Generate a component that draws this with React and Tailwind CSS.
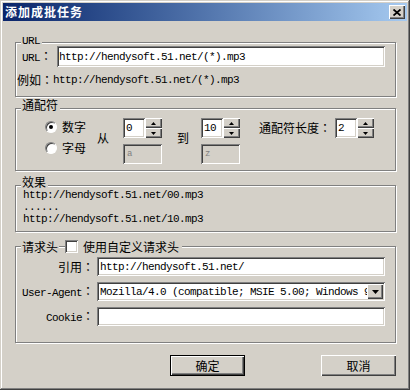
import React from "react";

const MONO = "font-['Liberation_Mono'] text-[11px] tracking-[-0.6px]";
const COLON = "font-['Noto_Sans_CJK_TC']";
const SUNKEN =
  "shadow-[inset_1px_1px_#808080,inset_-1px_-1px_#ffffff,inset_2px_2px_#404040,inset_-2px_-2px_#d4d0c8]";
const RAISED =
  "shadow-[inset_1px_1px_#ffffff,inset_-1px_-1px_#404040,inset_-2px_-2px_#808080]";
const ETCHED = "border border-[#808080] shadow-[1px_1px_0_#ffffff,inset_1px_1px_0_#ffffff]";

const Arrow = ({ down }) => (
  <svg width="5" height="3" viewBox="0 0 5 3">
    <path d={down ? "M0 0H5L2.5 3z" : "M2.5 0L5 3H0z"} fill="#000" />
  </svg>
);

const Spin = ({ value }) => (
  <div className="flex h-[20px]">
    <div className={`flex h-full w-[22px] items-center bg-white pl-[3px] ${SUNKEN} ${MONO}`}>{value}</div>
    <div className="flex w-[17px] flex-col">
      <div className={`flex h-[10px] items-center justify-center bg-[#d4d0c8] ${RAISED}`}>
        <Arrow />
      </div>
      <div className={`flex h-[10px] items-center justify-center bg-[#d4d0c8] ${RAISED}`}>
        <Arrow down />
      </div>
    </div>
  </div>
);

const Disabled = ({ value }) => (
  <div
    className={`flex h-[20px] w-[39px] items-center bg-[#d4d0c8] pl-[4px] font-['Liberation_Mono'] text-[9px] text-[#808080] ${SUNKEN}`}
  >
    {value}
  </div>
);

const Radio = ({ checked, label }) => (
  <div className="flex h-[16px] items-center gap-[5px]">
    <div className="flex h-[12px] w-[12px] items-center justify-center rounded-full border border-t-[#808080] border-l-[#808080] border-r-white border-b-white bg-white shadow-[inset_1px_1px_#404040]">
      {checked && <div className="h-[4px] w-[4px] rounded-full bg-black" />}
    </div>
    <span>{label}</span>
  </div>
);

const Group = ({ legend, className, children }) => (
  <div className={`ml-[12px] mr-[11px] ${ETCHED} ${className}`}>
    <div className="-mt-[10px] ml-[5px] h-[12px] w-fit bg-[#d4d0c8] pl-[1px] pr-[2px]">{legend}</div>
    {children}
  </div>
);

const Field = ({ children, className = "" }) => (
  <div className={`flex h-[19px] w-[288px] items-center overflow-hidden bg-white pl-[3px] ${SUNKEN} ${className}`}>
    {children}
  </div>
);

export default function App() {
  return (
    <div className="h-[390px] w-[410px] overflow-hidden bg-[#d4d0c8] p-[3px] font-['Noto_Sans_CJK_SC',sans-serif] text-[12px] leading-[12px] text-black shadow-[inset_-1px_-1px_#404040,inset_1px_1px_#d4d0c8,inset_-2px_-2px_#808080,inset_2px_2px_#ffffff]">
      {/* title bar */}
      <div className="flex h-[18px] items-center justify-between bg-linear-to-r from-[#0a246a] to-[#a6caf0] pl-[2px] pr-[2px]">
        <span className="font-bold tracking-[1px] text-white">添加成批任务</span>
        <div className={`flex h-[14px] w-[16px] items-center justify-center bg-[#d4d0c8] ${RAISED}`}>
          <svg width="8" height="7" viewBox="0 0 8 7">
            <path d="M0.5 0.5L7.5 6.5M7.5 0.5L0.5 6.5" stroke="#000" strokeWidth="1.8" />
          </svg>
        </div>
      </div>

      {/* URL */}
      <Group className="mt-[21px] pb-[10px]" legend={<span className={MONO}>URL</span>}>
        <div className="mt-[1px] flex items-center">
          <span className="ml-[6px] w-[35px]">
            <span className={MONO}>URL</span>
            <span className={COLON}>：</span>
          </span>
          <div className={`flex h-[21px] w-[328px] items-center bg-white pl-[2px] ${SUNKEN} ${MONO}`}>
            http://hendysoft.51.net/(*).mp3
          </div>
        </div>
        <div className="mt-[7px] flex h-[12px] items-center pl-[1px]">
          <span>例如</span>
          <span className={COLON}>：</span>
          <span className={MONO}>http://hendysoft.51.net/(*).mp3</span>
        </div>
      </Group>

      {/* 通配符 */}
      <Group className="mt-[11px] pb-[6px]" legend="通配符">
        <div className="flex items-start">
          <div className="ml-[29px] mt-[8px] flex flex-col gap-[5px]">
            <Radio checked label="数字" />
            <Radio label="字母" />
          </div>
          <span className="ml-[11px] mt-[21px]">从</span>
          <div className="ml-[14px] mt-[7px] flex flex-col gap-[6px]">
            <Spin value="0" />
            <Disabled value="a" />
          </div>
          <span className="ml-[15px] mt-[21px]">到</span>
          <div className="ml-[12px] mt-[7px] flex flex-col gap-[6px]">
            <Spin value="10" />
            <Disabled value="z" />
          </div>
          <span className="ml-[19px] mt-[11px]">
            通配符长度<span className={COLON}>：</span>
          </span>
          <div className="ml-[4px] mt-[7px]">
            <Spin value="2" />
          </div>
        </div>
      </Group>

      {/* 效果 */}
      <Group className="mt-[14px] pb-[6px]" legend="效果">
        <div className={`mt-[1px] flex flex-col pl-[7px] leading-[12px] ${MONO}`}>
          <span>http://hendysoft.51.net/00.mp3</span>
          <span>......</span>
          <span>http://hendysoft.51.net/10.mp3</span>
        </div>
      </Group>

      {/* 请求头 */}
      <div className={`ml-[12px] mr-[11px] mt-[14px] pb-[16px] ${ETCHED}`}>
        <div className="-mt-[7px] ml-[5px] flex h-[13px] items-center">
          <span className="bg-[#d4d0c8] px-[1px]">请求头</span>
          <div className="ml-[6px] flex items-center bg-[#d4d0c8] pr-[3px]">
            <div className={`h-[13px] w-[13px] bg-white ${SUNKEN}`} />
            <span className="ml-[5px]">使用自定义请求头</span>
          </div>
        </div>
        <div className="mt-[4px] flex flex-col gap-[6px]">
          <div className="flex items-center">
            <span className="w-[78px] text-right">
              引用<span className={COLON}>：</span>
            </span>
            <Field className="ml-[3px]">
              <span className={MONO}>http://hendysoft.51.net/</span>
            </Field>
          </div>
          <div className="flex items-center">
            <span className="w-[78px] text-right">
              <span className={MONO}>User-Agent</span>
              <span className={COLON}>：</span>
            </span>
            <Field className="ml-[3px] justify-between pr-[2px]">
              <span className={`overflow-hidden whitespace-nowrap ${MONO}`}>
                Mozilla/4.0 (compatible; MSIE 5.00; Windows 98)
              </span>
              <div className={`flex h-[15px] w-[16px] shrink-0 items-center justify-center bg-[#d4d0c8] ${RAISED}`}>
                <svg width="7" height="4" viewBox="0 0 7 4">
                  <path d="M0 0H7L3.5 4z" fill="#000" />
                </svg>
              </div>
            </Field>
          </div>
          <div className="flex items-center">
            <span className="w-[78px] text-right">
              <span className={MONO}>Cookie</span>
              <span className={COLON}>：</span>
            </span>
            <Field className="ml-[3px]" />
          </div>
        </div>
      </div>

      {/* buttons */}
      <div className="mr-[11px] mt-[12px] flex justify-end gap-[76px]">
        <button className={`h-[21px] w-[75px] border border-black bg-[#d4d0c8] ${RAISED}`}>确定</button>
        <button className={`h-[21px] w-[75px] bg-[#d4d0c8] ${RAISED}`}>取消</button>
      </div>
    </div>
  );
}
